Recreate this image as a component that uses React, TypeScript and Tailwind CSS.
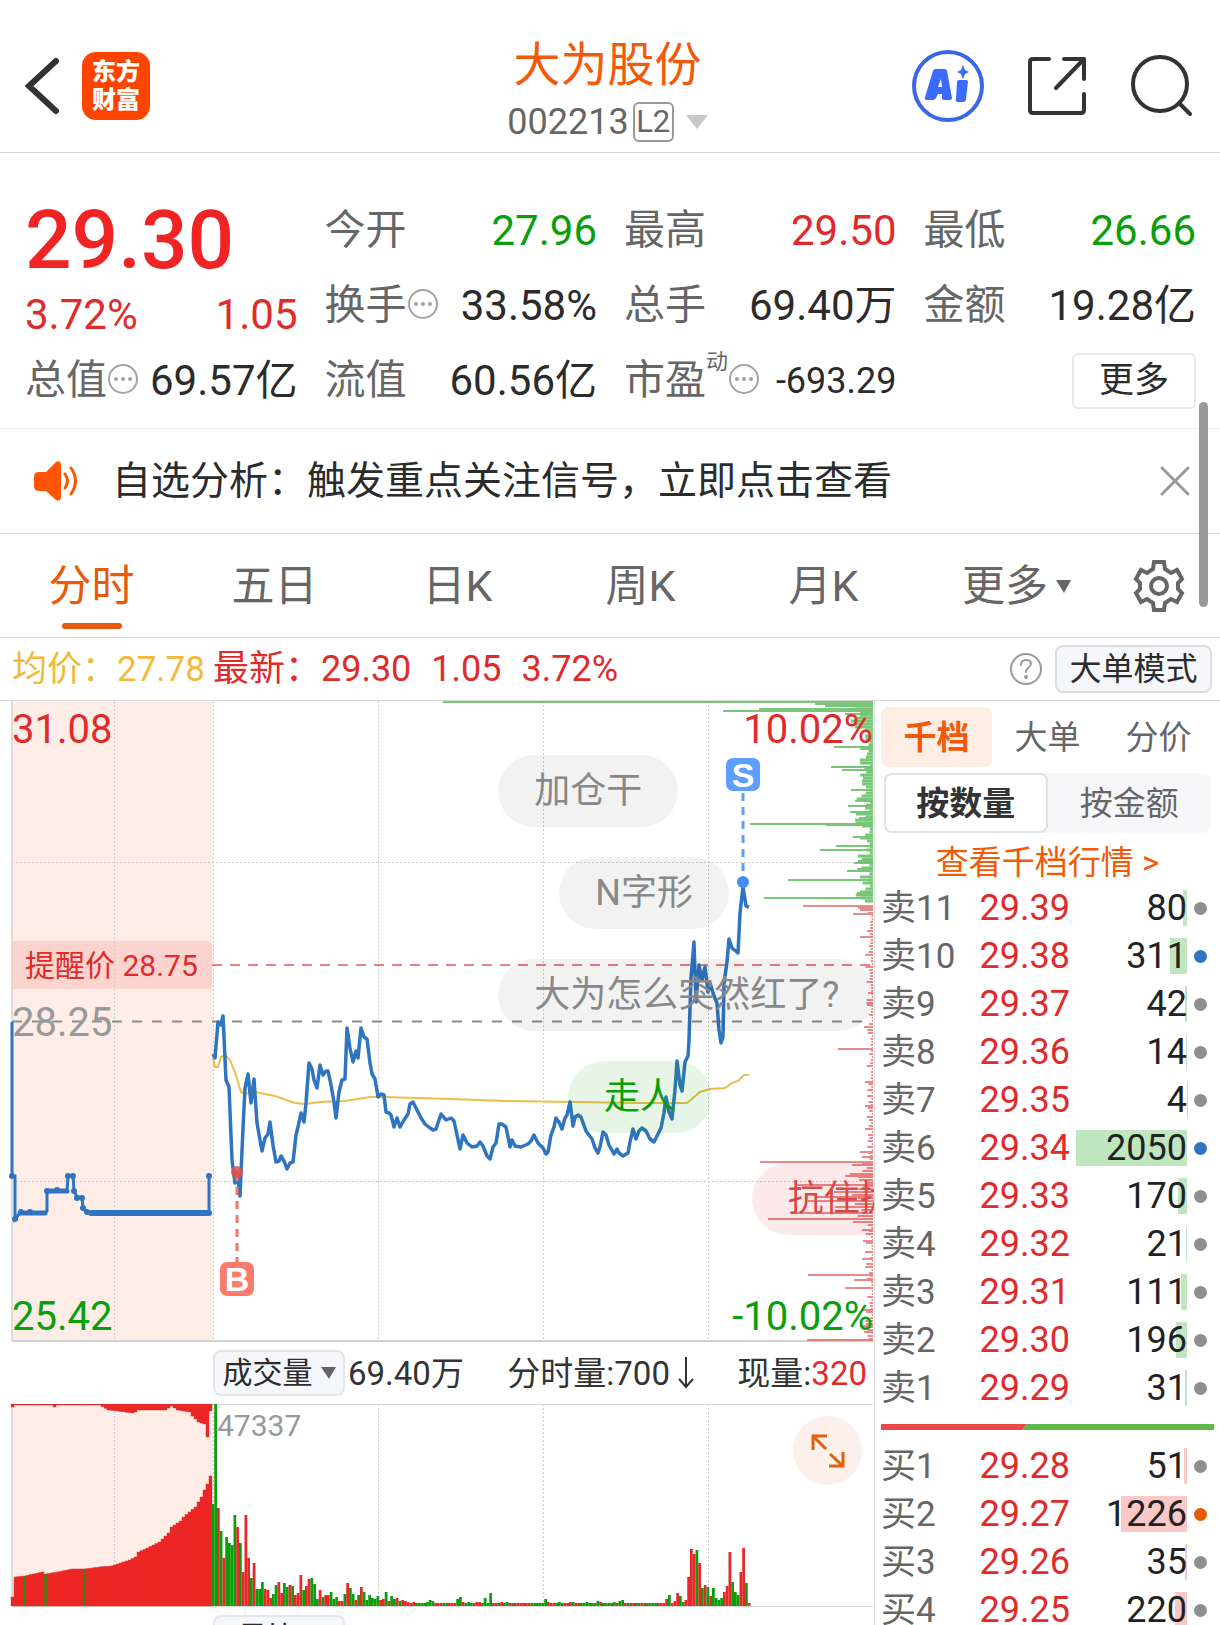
import { useState } from "react"
import type { ReactNode } from "react"
import clsx from "clsx"

interface OrderRow {
  label: string
  price: string
  volume: number
  dot: "gray" | "blue" | "orange"
}

const sells: OrderRow[] = [
  { label: "卖11", price: "29.39", volume: 80, dot: "gray" },
  { label: "卖10", price: "29.38", volume: 311, dot: "blue" },
  { label: "卖9", price: "29.37", volume: 42, dot: "gray" },
  { label: "卖8", price: "29.36", volume: 14, dot: "gray" },
  { label: "卖7", price: "29.35", volume: 4, dot: "gray" },
  { label: "卖6", price: "29.34", volume: 2050, dot: "blue" },
  { label: "卖5", price: "29.33", volume: 170, dot: "gray" },
  { label: "卖4", price: "29.32", volume: 21, dot: "gray" },
  { label: "卖3", price: "29.31", volume: 111, dot: "gray" },
  { label: "卖2", price: "29.30", volume: 196, dot: "gray" },
  { label: "卖1", price: "29.29", volume: 31, dot: "gray" },
]

const buys: OrderRow[] = [
  { label: "买1", price: "29.28", volume: 51, dot: "gray" },
  { label: "买2", price: "29.27", volume: 1226, dot: "orange" },
  { label: "买3", price: "29.26", volume: 35, dot: "gray" },
  { label: "买4", price: "29.25", volume: 220, dot: "gray" },
]

const MAX_VOLUME = 2050

const auctionLine =
  "12,321 12,475 15,475 15,518 20,512 45,512 47,510 47,490 67,490 68,475 73,475 74,490 77,496 82,496 83,507 87,511 91,512 209,512 209,475"

const auctionDots = [
  [12, 475], [15, 518], [21, 511], [30, 511], [47, 490], [57, 489], [68, 475], [73, 475],
  [74, 490], [77, 497], [82, 497], [83, 507], [87, 511], [209, 475],
]

const priceLine =
  "213,353 215,357 218,321 221,324 223,315 226,379 229,386 232,459 235,482 237,471 240,495 243,427 245,387 248,373 251,402 254,378 257,422 260,439 262,450 265,437 268,433 270,421 273,444 276,461 279,460 281,455 284,460 287,468 290,462 293,461 296,434 298,426 301,412 304,421 306,402 309,362 312,368 314,379 317,387 320,364 323,374 326,370 328,370 331,384 334,401 336,417 339,391 342,379 345,378 347,327 350,347 353,361 356,350 358,357 361,327 364,336 367,338 370,362 372,373 375,378 378,396 381,393 384,394 386,411 389,412 391,414 394,426 397,417 400,426 404,419 408,413 410,403 413,401 417,409 421,417 425,423 430,427 433,429 436,428 439,419 441,413 446,419 451,417 454,420 460,448 463,434 467,442 472,446 477,445 480,441 483,445 487,455 490,458 493,446 496,442 499,423 502,423 506,426 510,446 512,439 515,445 521,446 528,443 531,440 534,434 538,442 543,447 546,453 548,451 551,434 554,426 556,417 559,421 562,428 565,417 567,414 570,401 573,425 575,416 578,414 581,416 586,430 592,438 595,447 598,452 600,446 603,431 606,434 609,444 614,453 617,448 619,452 623,455 628,452 630,441 633,428 636,438 639,430 642,427 646,430 650,438 654,441 657,435 661,427 664,412 666,396 669,411 672,418 675,389 677,360 680,384 682,390 685,361 688,355 689,339 691,277 694,241 696,301 699,264 702,279 705,266 708,291 710,282 714,295 717,302 719,329 721,342 723,336 724,282 727,261 729,238 732,247 738,252 740,212 743,186 746,205 749,206"

const averageLine =
  "213,357 215,366 218,366 221,356 225,354 230,359 236,374 241,391 245,393 255,391 275,395 295,402 305,403 320,401 345,400 370,396 383,396 450,398 507,400 573,401 640,402 687,402 693,397 700,391 710,388 725,387 732,382 738,380 744,374 749,374"

// [y, x start] of the long order-depth lines, all end at the right edge
const sellDepth = [
  [1, 443], [3, 815], [5, 825], [8, 759], [10, 723], [13, 845], [46, 834], [48, 860], [66, 831],
  [69, 842], [89, 851], [100, 855], [105, 848], [111, 850], [117, 859], [123, 750], [124, 826],
  [136, 853], [145, 836], [149, 820], [160, 858], [162, 854], [168, 857], [170, 847], [179, 788],
  [192, 857], [197, 764],
]

const buyDepth = [
  [205, 803], [207, 858], [209, 860], [213, 853], [236, 860], [254, 867], [292, 868], [304, 867],
  [326, 864], [348, 838], [381, 865], [405, 865], [428, 865], [451, 860], [456, 862], [461, 760],
  [463, 862], [473, 850], [475, 845], [484, 797], [491, 834], [496, 816], [500, 808], [506, 835],
  [512, 795], [518, 768], [529, 862], [540, 863], [558, 862], [574, 808], [579, 854], [587, 845],
  [609, 863], [625, 860], [631, 864], [639, 807],
]

// short ticks that fill the depth column between the long lines
const noise = (y: number) => Math.abs(Math.sin(y * 12.9898) * 43758.5453) % 1

function tickLength(y: number) {
  const n = noise(y)
  if (y < 28) return 10 + n * 16
  if (y < 204) return 3 + n * n * 15
  if (y > 458 && y < 522) return 6 + n * 16
  return 1 + n * n * 7
}

const ticks = Array.from({ length: 213 }, (_, i) => i * 3 + 2)

// opening auction bars: [bar index, height], heights between are interpolated
const matchedStops = [
  [0, 9], [1, 29], [4, 30], [7, 32], [10, 34], [11, 32], [15, 34], [20, 37], [24, 37], [29, 39],
  [33, 40], [36, 43], [39, 46], [41, 49], [42, 54], [45, 58], [49, 64], [52, 73], [53, 79],
  [56, 85], [57, 89], [61, 99], [63, 109], [64, 116], [65, 122], [66, 130],
]

const unmatchedStops = [
  [0, 3], [1, 1], [13, 1], [14, 3], [15, 1], [29, 1], [32, 6], [35, 7], [40, 9], [41, 8], [42, 6],
  [51, 6], [53, 2], [55, 6], [59, 8], [60, 12], [62, 18], [64, 20], [65, 33], [66, 7],
]

function interpolate(stops: number[][], i: number) {
  const next = stops.findIndex(([x]) => x >= i)
  if (next <= 0) return stops[0][1]
  const [x0, y0] = stops[next - 1]
  const [x1, y1] = stops[next]
  return y0 + ((y1 - y0) * (i - x0)) / (x1 - x0)
}

const auctionBars = Array.from({ length: 67 }, (_, i) => i)

// one entry a minute, g = down, r = up
const volumeBars =
  "g102 g202 r98 g75 r48 g69 g63 g61 g91 r79 g63 r34 r91 r48 g28 r43 g17 g17 g24 r17 r16 r8 g12 g21 r24 r13 g23 g19 r21 g20 r11 r13 r31 g16 r20 r27 g28 g22 g7 r16 g9 r11 r11 g14 g7 g9 r5 r5 g12 r23 g18 g12 r6 g11 r19 g14 g6 g11 g8 g7 g10 r6 r7 g14 r5 g10 g7 r8 g5 r6 r5 r4 r3 r4 g3 g3 g3 g3 g4 g6 g5 r3 r3 r3 g3 g3 r3 r3 r3 g7 g9 r4 g3 g4 g3 r3 r4 r4 g3 g8 g3 g13 r3 r3 g3 r4 g3 g4 r3 g3 r3 r3 r3 r3 r3 r3 g3 g3 g3 g3 g3 g7 r4 r3 r3 g3 g4 g3 r3 r3 r4 g4 r3 r3 g3 g3 g4 g3 g3 g3 g5 r4 g3 g3 g3 g3 g4 r3 g5 g6 r3 g3 r3 r3 g3 g3 r3 r3 g3 g3 g3 g3 r3 r3 r3 r7 g11 r3 r5 r13 g10 g4 r6 r29 r57 r52 g56 r43 g18 r21 g19 r10 g18 g8 g6 g8 r14 r20 r54 g24 g14 g11 r34 r58 g23 r3".split(" ")

const dotColors = {
  gray: "bg-[#8e8e93]",
  blue: "bg-[#2f74c0]",
  orange: "bg-[#e65a00]",
}

function MoreDots() {
  return (
    <svg viewBox="0 0 32 32" className="mb-1 size-8 shrink-0" fill="#a3a3a3">
      <circle cx="16" cy="16" r="14" fill="none" stroke="#a3a3a3" strokeWidth="2" />
      <circle cx="9" cy="16" r="2" />
      <circle cx="16" cy="16" r="2" />
      <circle cx="23" cy="16" r="2" />
    </svg>
  )
}

interface StatProps {
  label: string
  value: string
  color?: string
  info?: boolean
}

function Stat({ label, value, color = "text-[#2b2b2b]", info }: StatProps) {
  return (
    <div className="flex h-[75px] items-center justify-between whitespace-nowrap">
      <span className="flex items-center text-[41px] text-[#666]">
        {label}
        {info && <MoreDots />}
      </span>
      <span className={color}>{value}</span>
    </div>
  )
}

function Header() {
  return (
    <header className="grid h-[153px] grid-cols-[1fr_auto_1fr] items-center border-b border-[#d9d9d9] pt-5 pr-[27px] pl-[22px]">
      <div className="flex items-center gap-5">
        <button aria-label="返回">
          <svg viewBox="0 0 40 60" className="h-[60px] w-10" fill="none" stroke="#333" strokeWidth="6">
            <path d="M34 5 7 30l27 25" strokeLinecap="round" />
          </svg>
        </button>
        <a
          href="#"
          className="flex size-[68px] flex-col items-center justify-center rounded-[14px] bg-[#ff4400] text-2xl leading-7 font-black text-white"
        >
          <span>东方</span>
          <span>财富</span>
        </a>
      </div>

      <div className="flex flex-col items-center pt-3">
        <h1 className="text-[47px] leading-[60px] text-[#f25a08]">大为股份</h1>
        <button className="flex h-[54px] items-center text-4xl text-[#666]">
          002213
          <span className="ml-1 flex h-10 w-[41px] items-center justify-center rounded-md border-2 border-[#999] text-[31px]">
            L2
          </span>
          <svg viewBox="0 0 22 14" className="ml-3 h-[14px] w-[22px]" fill="#c8c8c8">
            <path d="M0 0h22L11 14z" />
          </svg>
        </button>
      </div>

      <div className="flex items-center justify-end gap-[42px]">
        <button aria-label="AI">
          <svg viewBox="0 0 74 74" className="size-[74px]" fill="#3a6bfa">
            <circle cx="37" cy="37" r="34" fill="none" stroke="#3a66e8" strokeWidth="4" />
            <path
              fillRule="evenodd"
              d="M24 20h9q3 0 3 2l5 27q0 2-2 2h-6q-2 0-2-2v-4h-4l-2 4q-1 2-3 2h-6q-3 0-2-3l8-26q1-2 2-2zM30 30l-3 8h4z"
            />
            <path d="M48 31h7q2 0 2 2l-2 17q0 3-3 3h-5q-3 0-2-3l1-17q0-2 2-2z" />
            <path d="m52 16 2 5 4 2-4 2-2 5-2-5-4-2 4-2z" />
          </svg>
        </button>
        <button aria-label="分享">
          <svg viewBox="0 0 60 60" className="size-[60px]" fill="none" stroke="#333" strokeWidth="4" strokeLinecap="round" strokeLinejoin="round">
            <path d="M22 3H6q-3 0-3 3v48q0 3 3 3h48q3 0 3-3V38" />
            <path d="M37 3h20v20M57 3 29 32" />
          </svg>
        </button>
        <button aria-label="搜索">
          <svg viewBox="0 0 64 64" className="size-16" fill="none" stroke="#333" strokeWidth="4" strokeLinecap="round">
            <circle cx="31" cy="30" r="27" />
            <path d="m50 49 11 11" />
          </svg>
        </button>
      </div>
    </header>
  )
}

function Quote() {
  return (
    <section className="grid grid-cols-4 gap-x-[27px] border-b border-[#ececec] pt-10 pr-6 pb-[10px] pl-[25px] text-[42px] leading-none">
      <div className="row-span-2 flex flex-col text-[#e02b2b]">
        <span className="flex h-[94px] items-center text-[82px] font-medium text-[#f02424]">29.30</span>
        <div className="flex h-14 items-center justify-between">
          <span>3.72%</span>
          <span>1.05</span>
        </div>
      </div>
      <Stat label="今开" value="27.96" color="text-[#0a9f0a]" />
      <Stat label="最高" value="29.50" color="text-[#e02b2b]" />
      <Stat label="最低" value="26.66" color="text-[#0a9f0a]" />
      <Stat label="换手" value="33.58%" info />
      <Stat label="总手" value="69.40万" />
      <Stat label="金额" value="19.28亿" />
      <Stat label="总值" value="69.57亿" info />
      <Stat label="流值" value="60.56亿" />
      <div className="flex h-[75px] items-center justify-between whitespace-nowrap">
        <span className="flex items-center text-[41px] text-[#666]">
          市盈
          <sup className="mb-4 text-[22px]">动</sup>
          <MoreDots />
        </span>
        <span className="text-4xl text-[#2b2b2b]">-693.29</span>
      </div>
      <div className="flex h-[75px] items-center justify-end">
        <button className="h-14 w-[124px] rounded-md border-2 border-[#e8e8e8] text-[35px] leading-none text-[#2b2b2b]">
          更多
        </button>
      </div>
    </section>
  )
}

function Notice() {
  return (
    <section className="flex h-[105px] items-center border-b border-[#d9d9d9] pr-7 pl-[34px]">
      <svg viewBox="0 0 46 42" className="h-[42px] w-[46px]" fill="#ff5500">
        <path d="M5 12h7L22 2q4-2 5 2v34q-1 4-5 2L12 31H5q-5 0-5-5v-9q0-5 5-5z" />
        <path d="M31 14q5 7 0 14M37 8q9 13 0 26" fill="none" stroke="#ff5500" strokeWidth="3" strokeLinecap="round" />
      </svg>
      <a href="#" className="ml-8 flex-1 text-[39px] leading-none text-[#2b2b2b]">
        自选分析：触发重点关注信号，立即点击查看
      </a>
      <button aria-label="关闭">
        <svg viewBox="0 0 34 34" className="size-[34px]" stroke="#999" strokeWidth="3" strokeLinecap="round">
          <path d="m4 4 26 26M30 4 4 30" />
        </svg>
      </button>
    </section>
  )
}

const periods = ["分时", "五日", "日K", "周K", "月K", "更多"]

function PeriodTabs() {
  const [active, setActive] = useState("分时")

  return (
    <nav className="grid h-[104px] grid-cols-[repeat(6,3fr)_2fr] border-b border-[#d9d9d9]">
      {periods.map((period) => (
        <button
          key={period}
          onClick={() => setActive(period)}
          className={clsx(
            "flex flex-col items-center pt-[26px] text-[43px] leading-[52px]",
            active === period ? "text-[#e65a0a]" : "text-[#666]",
          )}
        >
          <span className={clsx("flex items-center gap-2", period === "更多" && "pl-5")}>
            {period}
            {period === "更多" && (
              <svg viewBox="0 0 15 13" className="h-[13px] w-[15px]" fill="#666">
                <path d="M0 0h15L8 13z" />
              </svg>
            )}
          </span>
          {active === period && <span className="mt-[11px] h-[6px] w-[60px] rounded-full bg-[#e65a0a]" />}
        </button>
      ))}
      <button aria-label="设置" className="flex items-center justify-center">
        <svg viewBox="-27 -27 54 54" className="size-[54px]" fill="none" stroke="#666" strokeWidth="4">
          <path d="M-5-24H5L6-17 12-13 18-16 23-7 19-3V3L23 7 18 16 12 13 6 17 5 24H-5L-6 17-12 13-18 16-23 7-19 3V-3L-23-7-18-16-12-13-6-17z" />
          <circle r="8" />
        </svg>
      </button>
    </nav>
  )
}

function LatestBar() {
  return (
    <section className="flex h-[63px] items-center border-b border-[#d9d9d9] pr-2 pl-3 text-4xl leading-none whitespace-nowrap text-[#e02b2b]">
      <span className="text-[35px] text-[#f2b93b]">均价：27.78</span>
      <span className="ml-2">最新：29.30</span>
      <span className="ml-5">1.05</span>
      <span className="ml-5">3.72%</span>
      <button aria-label="帮助" className="ml-auto">
        <svg viewBox="0 0 34 34" className="size-[34px]" fill="none" stroke="#999" strokeWidth="2" strokeLinecap="round">
          <circle cx="17" cy="17" r="15" />
          <path d="M12 13q0-5 5-5t5 4q0 2-3 4-2 2-2 4" />
          <circle cx="17" cy="25" r="1" />
        </svg>
      </button>
      <button className="ml-3 h-12 w-[157px] rounded-lg border-2 border-[#dcdde0] bg-[#f6f7fa] text-[32px] leading-none text-[#2b2b2b]">
        大单模式
      </button>
    </section>
  )
}

function Bubble({ className, children }: { className: string; children: ReactNode }) {
  return (
    <span className={clsx("absolute flex h-[72px] items-center rounded-full px-9 text-4xl leading-none whitespace-nowrap", className)}>
      {children}
    </span>
  )
}

function GridColumns({ height }: { height: number }) {
  return (
    <g stroke="#ccc" strokeDasharray="2 2">
      {[114, 213, 378, 543, 708].map((x) => (
        <path key={x} d={`M${x}.5 0V${height}`} />
      ))}
    </g>
  )
}

function PriceChart() {
  return (
    <div className="relative overflow-hidden">
      <svg viewBox="0 0 874 641" className="block w-full" fontSize="40">
        <rect x="12" y="1" width="201" height="639" fill="#fdede6" />
        <GridColumns height={640} />
        <path d="M12 161.5H873M12 480.5H873" stroke="#ccc" strokeDasharray="2 2" />
        <path d="M12 0V640" stroke="#ddd" strokeWidth="2" />
        <path d="M12 640H873" stroke="#d2d2d2" strokeWidth="2" />

        {/* Order depth along the right edge */}
        <g stroke="#3fae3f" strokeWidth="2" opacity=".7">
          {sellDepth.map(([y, x]) => <path key={y} d={`M${x} ${y}H873`} />)}
          {ticks.filter((y) => y < 203).map((y) => <path key={y} d={`M${873 - tickLength(y)} ${y}H873`} strokeWidth="3" />)}
        </g>
        <g stroke="#e05a5a" strokeWidth="2" opacity=".7">
          {buyDepth.map(([y, x]) => <path key={y} d={`M${x} ${y}H873`} />)}
          {ticks.filter((y) => y > 203).map((y) => <path key={y} d={`M${873 - tickLength(y)} ${y}H873`} />)}
        </g>

        {/* Alert price */}
        <path d="M12 240H206q6 0 6 6V282q0 6-6 6H12z" fill="#f9c0bc" opacity=".55" />
        <path d="M212 264H870" stroke="#ea8080" strokeWidth="2" strokeDasharray="10 8" />
        <text x="25" y="275" fontSize="30" fill="#e02b2b">提醒价 28.75</text>

        <path d="M12 320.5H866" stroke="#8c8c8c" strokeWidth="2" strokeDasharray="10 10" />

        <text x="12" y="42" fill="#e02b2b">31.08</text>
        <text x="12" y="335" fill="#999">28.25</text>
        <text x="12" y="629" fill="#0a9f0a">25.42</text>

        <polyline points={averageLine} fill="none" stroke="#edbd4e" strokeWidth="2" />
        <g fill="none" stroke="#2f74c0" strokeWidth="3">
          <polyline points={auctionLine} />
          <path d="M91 512H209" strokeWidth="6" strokeLinecap="round" />
          <path d="M20 512H45M48 490H67" strokeWidth="5" strokeLinecap="round" />
          <polyline points={priceLine} strokeLinejoin="round" strokeWidth="3.5" />
        </g>
        {auctionDots.map(([x, y]) => (
          <circle key={`${x}-${y}`} cx={x} cy={y} r="3" fill="#2f74c0" />
        ))}

        <text x="873" y="42" textAnchor="end" fill="#e02b2b">10.02%</text>
        <text x="873" y="629" textAnchor="end" fill="#0a9f0a">-10.02%</text>

        {/* Trade marks */}
        <path d="M743 92V181" stroke="#5e9efc" strokeWidth="3" strokeDasharray="8 6" />
        <circle cx="743" cy="181" r="6" fill="#3f8ff0" />
        <rect x="726" y="57" width="34" height="33" rx="7" fill="#5e9efc" />
        <path d="M237 472V561" stroke="#f0766a" strokeWidth="3" strokeDasharray="8 6" />
        <circle cx="237" cy="471" r="6" fill="#e84d45" opacity=".85" />
        <rect x="220" y="561" width="34" height="34" rx="7" fill="#fc7c6c" />
        <g fontSize="34" fontWeight="700" fill="#fff" textAnchor="middle" fontFamily="Liberation Sans">
          <text x="743" y="86">S</text>
          <text x="237" y="590">B</text>
        </g>
      </svg>

      <Bubble className="top-[54px] left-[57%] bg-black/5 text-[#888]">加仓干</Bubble>
      <Bubble className="top-[156px] left-[64%] bg-black/5 text-[#888]">N字形</Bubble>
      <Bubble className="top-[258px] left-[57%] bg-black/5 text-[#888]">大为怎么突然红了?</Bubble>
      <Bubble className="top-[360px] left-[65%] bg-[#0a9f0a]/10 text-[#0a9f0a]">走人</Bubble>
      <Bubble className="top-[462px] left-[86%] bg-[#e02b2b]/10 text-[#d84848]">抗住抛</Bubble>
    </div>
  )
}

function IndicatorButton({ children }: { children: ReactNode }) {
  return (
    <button className="flex h-[46px] w-[132px] shrink-0 items-center justify-center gap-2 rounded-lg border-2 border-[#e4e5e8] bg-[#f6f7fa] text-[30px] leading-none text-[#2b2b2b]">
      {children}
      <svg viewBox="0 0 15 12" className="h-3 w-[15px]" fill="#666">
        <path d="M0 0h15L8 12z" />
      </svg>
    </button>
  )
}

function VolumeHeader() {
  return (
    <div className="flex h-[62px] items-center justify-between pr-[7px] pl-[213px] text-[33px] leading-none whitespace-nowrap text-[#333]">
      <div className="flex items-center gap-[3px]">
        <IndicatorButton>成交量</IndicatorButton>
        <span>69.40万</span>
      </div>
      <span className="flex items-center gap-2">
        分时量:700
        <svg viewBox="0 0 16 32" className="h-8 w-4" fill="none" stroke="#333" strokeWidth="2">
          <path d="M8 0v30M1 22l7 8 7-8" />
        </svg>
      </span>
      <span>
        现量:<span className="text-[#e02b2b]">320</span>
      </span>
    </div>
  )
}

function VolumeChart() {
  return (
    <div className="relative">
      <svg viewBox="0 0 874 203" className="block w-full">
        <rect x="12" width="201" height="202" fill="#fdede6" />
        <GridColumns height={202} />
        <path d="M12 .5H873M12 202.5H873" stroke="#d9d9d9" />
        <path d="M12 0V202" stroke="#ddd" strokeWidth="2" />
        {auctionBars.map((i) => {
          const x = 11 + i * 3
          const height = interpolate(matchedStops, i)
          const green = i === 4 || i === 11 || i === 24
          return (
            <g key={i} fill="#f22424" stroke="#d83030" strokeWidth=".4">
              <rect x={x} y="0" width="3" height={interpolate(unmatchedStops, i)} />
              <rect x={x} y={202 - height} width="3" height={height} fill={green ? "#2f8a0a" : undefined} />
            </g>
          )
        })}
        {volumeBars.map((bar, i) => {
          const height = Number(bar.slice(1))
          return (
            <rect
              key={i}
              x={211.5 + i * 2.75}
              y={202 - height}
              width="2.75"
              height={height}
              fill={bar[0] === "g" ? "#0a9f0a" : "#e82828"}
            />
          )
        })}
        <text x="217" y="32" fontSize="30" fill="#999">47337</text>
      </svg>
      <button aria-label="展开" className="absolute top-3 right-3 flex size-[69px] items-center justify-center rounded-full bg-[#fdf0ea]">
        <svg viewBox="0 0 34 34" className="size-[34px]" fill="none" stroke="#e0600f" strokeWidth="3">
          <path d="M2 16V2h14M2 2l13 13M32 18v14H18M32 32 19 20" />
        </svg>
      </button>
    </div>
  )
}

function NextIndicator() {
  return (
    <div className="flex items-center pt-2 pl-[213px]">
      <IndicatorButton>量比</IndicatorButton>
    </div>
  )
}

function OrderTable({ rows, side }: { rows: OrderRow[]; side: "sell" | "buy" }) {
  return (
    <table className="w-full table-fixed text-4xl leading-none">
      <tbody>
        {rows.map((row) => (
          <tr key={row.label} className="h-12">
            <th scope="row" className="w-[82px] p-0 pl-[6px] text-left text-[35px] font-normal whitespace-nowrap text-[#666]">
              {row.label}
            </th>
            <td className="p-0 text-right text-[#e02b2b]">{row.price}</td>
            <td className="w-[117px] p-0 pl-[6px] text-right text-[#222]">
              <div className="relative flex h-9 items-center justify-end">
                <span
                  className={clsx("absolute inset-y-0 right-0", side === "sell" ? "bg-[#bfe6bf]" : "bg-[#fbc8c8]")}
                  style={{ width: `${(row.volume / MAX_VOLUME) * 100}%` }}
                />
                <span className="relative">{row.volume}</span>
              </div>
            </td>
            <td className="w-[33px] p-0 pl-[7px]">
              <span className={clsx("block size-[13px] rounded-full", dotColors[row.dot])} />
            </td>
          </tr>
        ))}
      </tbody>
    </table>
  )
}

function OrderBook() {
  const [tab, setTab] = useState("千档")
  const [mode, setMode] = useState("按数量")

  return (
    <aside className="border-l border-[#d9d9d9] pt-[6px] text-[33px] leading-none">
      <div className="mx-[6px] grid grid-cols-3">
        {["千档", "大单", "分价"].map((name) => (
          <button
            key={name}
            onClick={() => setTab(name)}
            className={clsx("h-[60px] rounded-lg", tab === name ? "bg-[#fdede5] font-bold text-[#f25a08]" : "text-[#666]")}
          >
            {name}
          </button>
        ))}
      </div>

      <div className="mx-[9px] mt-[6px] grid grid-cols-2 rounded-lg bg-[#f7f7fa]">
        {["按数量", "按金额"].map((name) => (
          <button
            key={name}
            onClick={() => setMode(name)}
            className={clsx(
              "h-[60px] rounded-lg",
              mode === name ? "border-2 border-[#e2e2e4] bg-white font-bold text-[#333]" : "text-[#666]",
            )}
          >
            {name}
          </button>
        ))}
      </div>

      <a href="#" className="flex h-[51px] items-center justify-center pt-2 text-[#f25a08]">
        查看千档行情 &gt;
      </a>

      <OrderTable rows={sells} side="sell" />
      <svg viewBox="0 0 333 6" preserveAspectRatio="none" className="mx-[6px] my-3 block h-[6px] w-[333px] max-w-full">
        <path d="M0 0h146l-5 6H0z" fill="#e84848" />
        <path d="M146 0h187v6H141z" fill="#5cb848" />
      </svg>
      <OrderTable rows={buys} side="buy" />
    </aside>
  )
}

export default function App() {
  return (
    <div className="relative h-screen overflow-hidden bg-white font-[family-name:Roboto,'Noto_Sans_CJK_SC',sans-serif]">
      <Header />
      <Quote />
      <Notice />
      <PeriodTabs />
      <LatestBar />

      <main className="grid grid-cols-[minmax(0,1fr)_346px]">
        <div>
          <PriceChart />
          <VolumeHeader />
          <VolumeChart />
          <NextIndicator />
        </div>
        <OrderBook />
      </main>

      {/* Scroll thumb */}
      <div className="absolute top-[402px] right-3 h-[205px] w-[9px] rounded-full bg-[#999]" />
    </div>
  )
}
